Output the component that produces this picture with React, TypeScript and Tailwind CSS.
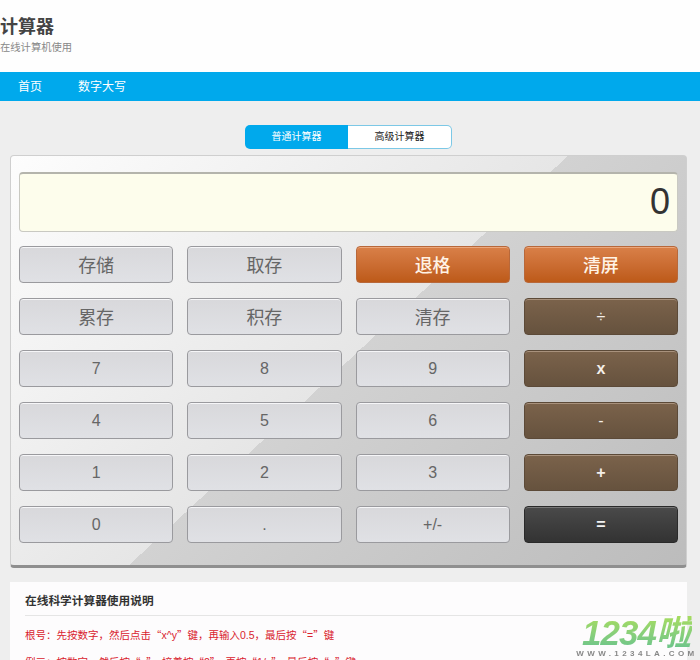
const buttons = [
  [
    { label: '存储', kind: 'gray', cjk: true },
    { label: '取存', kind: 'gray', cjk: true },
    { label: '退格', kind: 'orange', cjk: true },
    { label: '清屏', kind: 'orange', cjk: true },
  ],
  [
    { label: '累存', kind: 'gray', cjk: true },
    { label: '积存', kind: 'gray', cjk: true },
    { label: '清存', kind: 'gray', cjk: true },
    { label: '÷', kind: 'brown' },
  ],
  [
    { label: '7', kind: 'gray' },
    { label: '8', kind: 'gray' },
    { label: '9', kind: 'gray' },
    { label: 'x', kind: 'brown', bold: true },
  ],
  [
    { label: '4', kind: 'gray' },
    { label: '5', kind: 'gray' },
    { label: '6', kind: 'gray' },
    { label: '-', kind: 'brown' },
  ],
  [
    { label: '1', kind: 'gray' },
    { label: '2', kind: 'gray' },
    { label: '3', kind: 'gray' },
    { label: '+', kind: 'brown', bold: true },
  ],
  [
    { label: '0', kind: 'gray' },
    { label: '.', kind: 'gray' },
    { label: '+/-', kind: 'gray' },
    { label: '=', kind: 'dark', bold: true },
  ],
];

const kinds: Record<string, string> = {
  gray: 'border-[#9a9a9e] bg-gradient-to-b from-[#d8d8db] to-[#e0e1e5] text-[#666666] shadow-[inset_0_1px_0_#f6f6f8]',
  orange: 'border-[#b8683a] bg-gradient-to-b from-[#d98048] to-[#bd5a18] font-medium text-[#fff3e6] shadow-[inset_0_1px_0_#eba77c]',
  brown: 'border-[#5c4a38] bg-gradient-to-b from-[#7b634b] to-[#66523e] text-[#f4efe9] shadow-[inset_0_1px_0_#a8917c]',
  dark: 'border-[#2a2a2a] bg-gradient-to-b from-[#4a4a4a] to-[#333333] text-[#f2f2f2] shadow-[inset_0_1px_0_#777777]',
};

// full-width quotes come from the CJK font, Liberation's are narrow
function Q({ children }: { children: string }) {
  return <span className="font-['Noto_Sans_CJK_SC',sans-serif]">{children}</span>;
}

export default function App() {
  return (
    <div className="h-[660px] overflow-hidden bg-[#eeeeee] font-['Liberation_Sans','Noto_Sans_CJK_SC',sans-serif]">
      <header className="h-[72px] bg-[#fefefe] pt-[17px]">
        <h1 className="text-[18px] leading-[21px] font-bold text-[#444444]">计算器</h1>
        <p className="mt-[3px] text-[10.3px] leading-[14px] text-[#888888]">在线计算机使用</p>
      </header>

      <nav className="flex h-[29px] items-center gap-[36px] bg-[#00a9ec] pl-[18px] text-[12px] text-white">
        <span>首页</span>
        <span>数字大写</span>
      </nav>

      <div className="flex justify-center pt-[24px] pr-[3px]">
        <div className="flex h-[24px] w-[207px] text-[10px]">
          <div className="flex w-[103px] items-center justify-center rounded-l-[5px] bg-[#00a9ec] pb-[2px] text-white">普通计算器</div>
          <div className="flex flex-1 items-center justify-center rounded-r-[5px] border border-l-0 border-[#7cc8e6] bg-white pb-[2px] text-[#222222]">高级计算器</div>
        </div>
      </div>

      <main className="mt-[6px] ml-[10px] h-[413px] w-[677px] rounded-[4px] border border-[#cfcfcf] border-b-[3px] border-b-[#8f8f8f] bg-[linear-gradient(137deg,#fdfdfd_0%,#e6e6e6_50%,#d2d2d2_50%,#bcbcbc_100%)] px-[8px] pt-[16px]">
        <div className="flex h-[60px] items-center justify-end rounded-[4px] border border-[#c9c9c2] border-t-2 border-t-[#b4b4ac] bg-[#fdfdec] pr-[7px] pb-[2px] text-[36px] text-[#333333]">
          0
        </div>
        <div className="mt-[14px] grid grid-cols-4 gap-x-[14px] gap-y-[15px]">
          {buttons.flat().map((b, i) => (
            <button
              key={i}
              className={`flex h-[37px] items-center justify-center rounded-[4px] border ${kinds[b.kind]} ${
                b.cjk ? 'pt-[3px] text-[18px]' : 'text-[16px]'
              } ${b.bold ? 'font-bold' : ''}`}
            >
              {b.label}
            </button>
          ))}
        </div>
      </main>

      <section className="mt-[14px] ml-[10px] h-[200px] w-[677px] bg-[#fdfcfd] px-[15px] pt-[10px]">
        <h2 className="border-b border-[#e5e5e5] pb-[6px] text-[11.7px] leading-[17px] font-bold text-[#333333]">
          在线科学计算器使用说明
        </h2>
        <p className="mt-[10px] text-[10.5px] leading-[17px] text-[#d9232e]">
          根号：先按数字，然后点击<Q>“</Q>x^y<Q>”</Q>键，再输入0.5，最后按<Q>“</Q>=<Q>”</Q>键
        </p>
        <p className="mt-[9px] text-[10.5px] leading-[17px] text-[#d9232e]">
          例三：按数字，然后按<Q>“</Q>÷<Q>”</Q>，接着按<Q>“</Q>2<Q>”</Q>，再按<Q>“</Q>1/x<Q>”</Q>，最后按<Q>“</Q>=<Q>”</Q>键
        </p>
      </section>

      <div className="fixed right-[2px] bottom-[1px] flex w-[122px] flex-col items-center">
        <div className="bg-gradient-to-b from-[#a6dc5e] to-[#6cc48c] bg-clip-text pr-[2px] text-[35px] leading-[33px] font-bold tracking-[-1px] text-transparent italic">
          1234啦
        </div>
        <div className="text-[8px] leading-[10px] font-bold tracking-[3.4px] whitespace-nowrap text-[#888888]">WWW.1234LA.COM</div>
      </div>
    </div>
  );
}
